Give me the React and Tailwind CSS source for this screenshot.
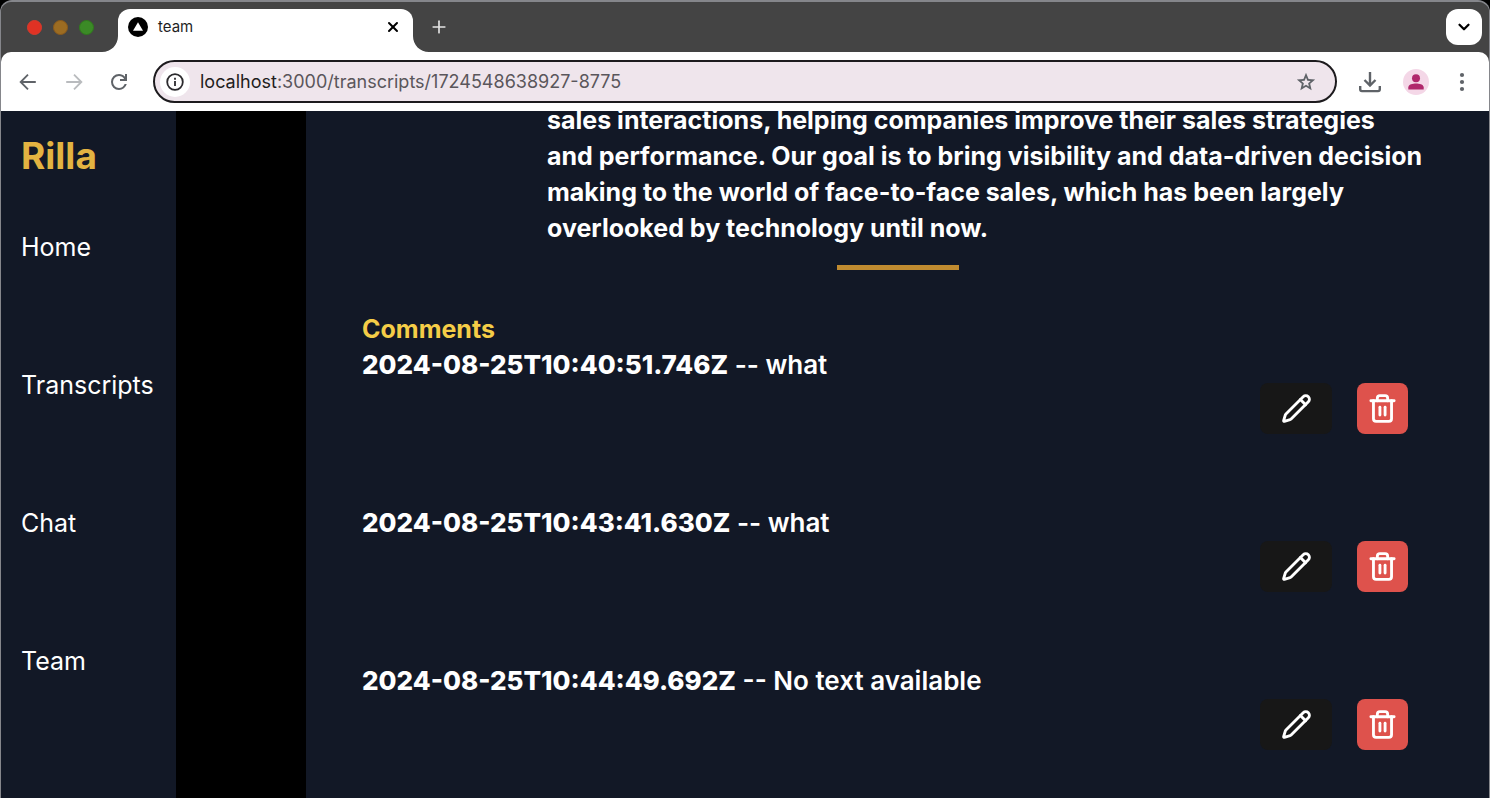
import React from "react";
import { Pencil, Trash2, ChevronDown, Plus, X } from "lucide-react";

const links = ["Home", "Transcripts", "Chat", "Team"];

const comments = [
  { time: "2024-08-25T10:40:51.746Z", text: "what" },
  { time: "2024-08-25T10:43:41.630Z", text: "what" },
  { time: "2024-08-25T10:44:49.692Z", text: "No text available" },
];

function TabStrip() {
  return (
    <div className="flex h-[50px] items-end bg-[#444444]">
      <div className="flex h-full items-center gap-[11px] pl-[26px]">
        <span className="size-[15px] rounded-full border border-[#d93a2b] bg-[#e03224]" />
        <span className="size-[15px] rounded-full border border-[#8a5a1c] bg-[#9c6c22]" />
        <span className="size-[15px] rounded-full border border-[#2f7a1c] bg-[#3b8a26]" />
      </div>
      <svg className="ml-2 h-4 w-4 text-white" viewBox="0 0 16 16" fill="currentColor" aria-hidden="true">
        <path d="M16 0v16H0C9 16 16 9 16 0Z" />
      </svg>
      <div className="flex h-[43px] w-[295px] items-start rounded-t-[12px] bg-white pl-[10px] pr-[10px] pt-2">
        <svg className="size-5" viewBox="0 0 20 20" aria-hidden="true">
          <circle cx="10" cy="10" r="10" fill="#000" />
          <path d="M10 5.2 15 13.8H5Z" fill="#fff" />
        </svg>
        <span className="ml-[10px] flex-1 text-[15px] leading-5 text-[#1f1f1f]">team</span>
        <button aria-label="Close tab" className="flex size-5 items-center justify-center text-black">
          <X size={16} strokeWidth={3} />
        </button>
      </div>
      <svg className="h-4 w-4 text-white" viewBox="0 0 16 16" fill="currentColor" aria-hidden="true">
        <path d="M0 0v16h16C7 16 0 9 0 0Z" />
      </svg>
      <button aria-label="New tab" className="flex h-full w-5 items-center justify-center text-[#e3e3e3]">
        <Plus size={22} strokeWidth={2} />
      </button>
      <button
        aria-label="Search tabs"
        className="mb-[7px] ml-auto mr-[7px] flex size-9 items-center justify-center rounded-[12px] bg-white text-black"
      >
        <ChevronDown size={18} strokeWidth={3} />
      </button>
    </div>
  );
}

function Toolbar() {
  return (
    <div className="bg-[#444444]">
      <div className="flex h-[59px] items-center rounded-t-[10px] bg-white pl-4 pr-4 text-[#5f6368]">
        <button aria-label="Back">
          <svg className="size-[22px]" viewBox="0 0 24 24" fill="none" stroke="currentColor" strokeWidth="2">
            <path d="M20.500 12H4.500M12 4 4 12l8 8" />
          </svg>
        </button>
        <button aria-label="Forward" className="ml-6 text-[#b9bbbe]">
          <svg className="size-[22px]" viewBox="0 0 24 24" fill="none" stroke="currentColor" strokeWidth="2">
            <path d="M3.500 12h16M12 4l8 8-8 8" />
          </svg>
        </button>
        <button aria-label="Reload" className="ml-[22px]">
          <svg className="size-6" viewBox="0 0 24 24" fill="currentColor">
            <path d="M12 20q-3.350 0-5.675-2.325T4 12t2.325-5.675T12 4q1.725 0 3.300.713T18 6.750V4h2v7h-7V9h4.200q-.8-1.400-2.187-2.200T12 6Q9.500 6 7.750 7.750T6 12t1.750 4.250T12 18q1.925 0 3.475-1.100T17.650 14h2.100q-.7 2.650-2.850 4.325T12 20Z" />
          </svg>
        </button>
        <div className="ml-[22px] flex h-[43px] min-w-0 flex-1 items-center rounded-full border-2 border-[#1d1b1e] bg-[#efe5ec] pl-[5px] pr-[18px]">
          <button aria-label="Site information" className="flex size-[30px] items-center justify-center rounded-full bg-white text-[#2b2a2d]">
            <svg className="size-[18px]" viewBox="0 0 18 18" fill="none" stroke="currentColor" strokeWidth="1.8">
              <circle cx="9" cy="9" r="7.800" />
              <path d="M9 8v5M9 4.800v1.900" />
            </svg>
          </button>
          <span className="ml-[10px] flex-1 text-[18px] leading-6 text-[#5a565b]">
            <span className="text-[#1f1d20]">localhost</span>:3000/transcripts/1724548638927-8775
          </span>
          <button aria-label="Bookmark this page">
            <svg className="size-[22px]" viewBox="0 0 24 24" fill="currentColor">
              <path d="m8.850 16.825 3.150-1.900 3.150 1.925-.825-3.600 2.775-2.400-3.650-.325-1.450-3.400-1.450 3.375-3.650.325 2.775 2.425-.825 3.575ZM5.825 21l1.625-7.025L2 9.250l7.200-.625L12 2l2.800 6.625 7.200.625-5.450 4.725L18.175 21 12 17.275 5.825 21Z" />
            </svg>
          </button>
        </div>
        <button aria-label="Downloads" className="ml-[22px]">
          <svg className="h-[22px] w-[22px]" viewBox="0 0 22 22" fill="none" stroke="currentColor" strokeWidth="2.400">
            <path d="M11 1v13M5.500 9l5.500 5.500L16.500 9M1.200 15v3.300q0 1.800 1.800 1.800h16q1.800 0 1.800-1.800V15" />
          </svg>
        </button>
        <button aria-label="Profile" className="ml-[22px]">
          <svg className="size-[26px]" viewBox="0 0 26 26" aria-hidden="true">
            <circle cx="13" cy="13" r="13" fill="#f4d7e7" />
            <circle cx="13" cy="9.200" r="4" fill="#b0286c" />
            <path d="M5.300 20.500v-2c0-3.200 4.600-4 7.700-4s7.700.8 7.700 4v2Z" fill="#b0286c" />
          </svg>
        </button>
        <button aria-label="Menu" className="ml-[22px]">
          <svg className="size-[22px]" viewBox="0 0 22 22" fill="currentColor">
            <circle cx="11" cy="4" r="2.100" />
            <circle cx="11" cy="11" r="2.100" />
            <circle cx="11" cy="18" r="2.100" />
          </svg>
        </button>
      </div>
    </div>
  );
}

function Comment({ time, text }) {
  return (
    <li className="mb-[71px]">
      <p>
        <strong className="font-extrabold">{time}</strong> -- {text}
      </p>
      <div className="flex justify-end gap-[25px] pr-[25px]">
        <button aria-label="Edit comment" className="flex h-[51px] w-[72px] items-center justify-center rounded-[8px] bg-[#171717]">
          <Pencil size={31} strokeWidth={2.2} />
        </button>
        <button aria-label="Delete comment" className="flex size-[51px] items-center justify-center rounded-[8px] bg-[#de524c]">
          <Trash2 size={31} strokeWidth={2.2} />
        </button>
      </div>
    </li>
  );
}

export default function App() {
  return (
    <div className="h-screen overflow-hidden bg-black font-['Inter',sans-serif]">
      <div className="flex h-full flex-col overflow-hidden rounded-t-[12px] border-x border-t-2 border-[#85868b] bg-[#444444]">
        <TabStrip />
        <Toolbar />
        <div className="flex min-h-0 flex-1 bg-black text-[25px] leading-9 text-white">
          <aside className="w-[175px] shrink-0 bg-[#121826] pl-5 pt-[23px]">
            <h1 className="text-[37px] font-bold leading-[44px] text-[#e3b341]">Rilla</h1>
            <nav className="mt-[51px] flex flex-col items-start gap-[102px]">
              {links.map((name) => (
                <a key={name} href="#">
                  {name}
                </a>
              ))}
            </nav>
          </aside>
          <main className="ml-[130px] min-w-0 flex-1 overflow-hidden bg-[#121826] px-14 font-bold">
            <p className="-mt-[9px] ml-[185px] whitespace-nowrap">
              sales interactions, helping companies improve their sales strategies
              <br />
              and performance. Our goal is to bring visibility and data-driven decision
              <br />
              making to the world of face-to-face sales, which has been largely
              <br />
              overlooked by technology until now.
            </p>
            <div className="mx-auto mt-[19px] h-[5px] w-[122px] bg-[#c08b30]" />
            <h2 className="mt-[41px] text-[#f5cd47]">Comments</h2>
            <ul className="text-[26px] leading-9 font-semibold">
              {comments.map((comment) => (
                <Comment key={comment.time} {...comment} />
              ))}
            </ul>
          </main>
        </div>
      </div>
    </div>
  );
}
